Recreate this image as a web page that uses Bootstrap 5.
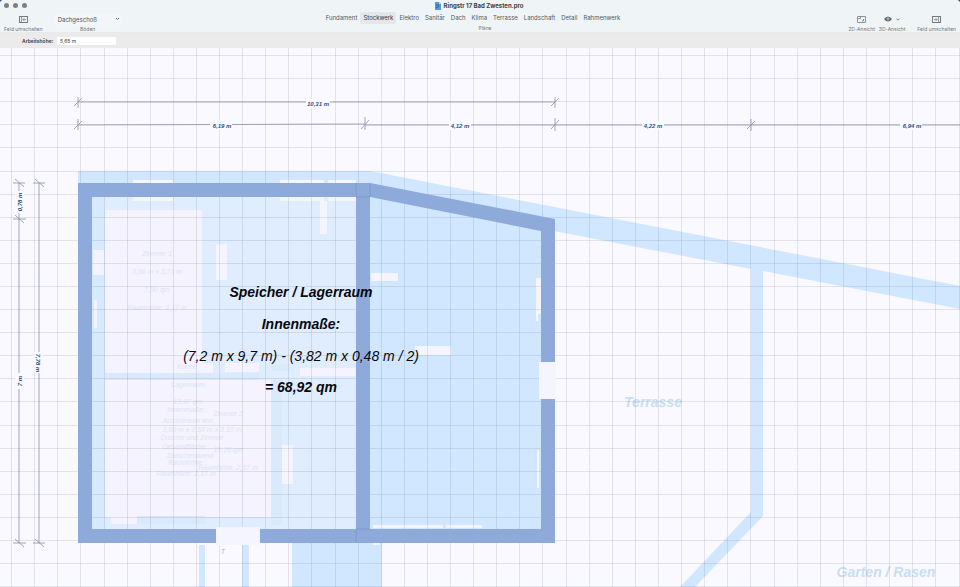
<!DOCTYPE html>
<html lang="de">
<head>
<meta charset="utf-8">
<meta name="viewport" content="width=device-width, initial-scale=1">
<title>Ringstr 17 Bad Zwesten.pro</title>
<link href="https://cdn.jsdelivr.net/npm/bootstrap@5.3.0/dist/css/bootstrap.min.css" rel="stylesheet">
<style>
body{background:#2c5579;font-family:Inter,"Liberation Sans",sans-serif;font-size:6px;line-height:8px;color:#55595d}
.app-window{border-radius:4px 4px 0 0;background:#faf9ff}
.title-bar{background:#eff4f7;height:33px;box-shadow:inset 0 -1px #e6eaec}
.title-bar button{background:none;border:0;padding:0;color:inherit;line-height:8px}
.side-group{flex:1 1 0}
.plan-group{margin-right:14px}
.doc-title{font-size:6px;font-weight:700;line-height:12px;color:#3f4245;gap:3px;padding-left:12px}
.traffic{padding:3px 0 0 4px;gap:4px;height:13px}
.traffic button{width:5px;height:5px;border-radius:50%;background:#7d8082}
.tool-label{font-size:5px;line-height:8px;color:#74787b}
.tool{height:20px}
.tool-icon{height:12px;display:flex;align-items:center;justify-content:center}
.title-bar .plan-tab{padding:1px 3px;line-height:10px;border-radius:2px}
.title-bar .plan-tab.active{background:#e3e7e9;color:#34373a}
.floor-select{appearance:none;width:66px;height:11px;border:0;border-radius:2px;background:#f2f6f8;color:#505458;font-size:6px;line-height:11px;padding:0 3px}
.select-wrap svg{right:1px;top:4px;pointer-events:none}
.height-bar{background:#ebebeb;height:15px;padding-left:22px;gap:4px;color:#3c3c3c}
.height-bar label{font-size:5px;font-weight:600;width:31px}
.height-bar input{width:59px;height:8px;border:0;padding:0 3px;font-size:5px;line-height:8px;background:#fff;color:#3c3c3c}
.plan text{font-family:"Liberation Sans",Arial,sans-serif;font-style:italic;text-anchor:middle}
.grid-line{stroke:#66708f;stroke-opacity:.17;shape-rendering:crispEdges;fill:none}
.wall{fill:#8eaadb}
.pale{fill:#d0e7ff}
.blank{fill:#f5f5ff}
.dims{stroke:#8b92a8;stroke-opacity:.8;fill:none}
.dim-text{font-size:6px;font-weight:700;fill:#2c5085}
.plate{fill:#faf9ff}
.room-text{font-size:14px;fill:#08080c}
.ghost{font-size:7px;fill:#dfe3f4}
.site{font-size:14px;font-weight:700;fill:#c6dff3}
</style>
</head>
<body class="vh-100 overflow-hidden">
<div class="app-window d-flex flex-column h-100 overflow-hidden">
<header class="title-bar d-flex flex-shrink-0">
  <div class="side-group">
    <div class="traffic d-flex">
      <button aria-label="Schließen"></button><button aria-label="Minimieren"></button><button aria-label="Zoomen"></button>
    </div>
    <div class="d-flex">
      <button class="tool ms-1 me-2 text-center">
        <span class="tool-icon"><svg width="9" height="7" viewBox="0 0 9 7" fill="none" stroke="#777b7e"><rect x=".5" y=".5" width="8" height="6"/><path d="M2.5 1v5M7 3.500H4M5.300 2L4 3.500l1.300 1.500" stroke-width=".7"/></svg></span>
        <span class="tool-label d-block">Feld umschalten</span>
      </button>
      <div class="tool ms-1 text-center">
        <div class="select-wrap position-relative tool-icon">
          <select class="floor-select" id="floor"><option>Dachgeschoß</option></select>
          <svg class="position-absolute" width="5" height="4" viewBox="0 0 5 4" fill="none" stroke="#666"><path d="M1 1l1.500 1.500L4 1"/></svg>
        </div>
        <label class="tool-label d-block" for="floor">Böden</label>
      </div>
    </div>
  </div>
  <div class="plan-group text-center">
    <div class="doc-title d-flex justify-content-center align-items-center">
      <svg width="6" height="8" viewBox="0 0 6 8"><path fill="#5a9ad8" d="M0 0h4l2 2v6H0z"/><path fill="#c5def3" d="M4 0v2h2z"/><path d="M1 3h3M1 6l3-2" stroke="#235f9e"/></svg>
      <span>Ringstr 17 Bad Zwesten.pro</span>
    </div>
    <nav class="d-flex" aria-label="Pläne">
      <button class="plan-tab">Fundament</button>
      <button class="plan-tab active">Stockwerk</button>
      <button class="plan-tab">Elektro</button>
      <button class="plan-tab">Sanitär</button>
      <button class="plan-tab">Dach</button>
      <button class="plan-tab">Klima</button>
      <button class="plan-tab">Terrasse</button>
      <button class="plan-tab">Landschaft</button>
      <button class="plan-tab">Detail</button>
      <button class="plan-tab">Rahmenwerk</button>
    </nav>
    <div class="tool-label ps-4">Pläne</div>
  </div>
  <div class="side-group d-flex justify-content-end align-items-end">
    <button class="tool me-1">
      <span class="tool-icon"><svg width="9" height="7" viewBox="0 0 9 7" fill="none" stroke="#777b7e"><path d="M.5 2.500v4h8v-6h-8v2h3v-2M5 5h1.500V3" stroke-width=".8"/></svg></span>
      <span class="tool-label d-block">2D-Ansicht</span>
    </button>
    <button class="tool me-2">
      <span class="tool-icon gap-1"><svg width="8" height="6" viewBox="0 0 8 6"><path d="M0 3q4-5 8 0q-4 5-8 0" fill="#5c6063"/><circle cx="4" cy="3" r="1.400" fill="#dfe4e7"/><circle cx="4" cy="3" r=".8" fill="#5c6063"/></svg><svg width="4" height="3" viewBox="0 0 4 3" fill="none" stroke="#666" stroke-width=".8"><path d="M.5.8L2 2.200L3.500.8"/></svg></span>
      <span class="tool-label d-block">3D-Ansicht</span>
    </button>
    <button class="tool ms-1 me-1">
      <span class="tool-icon"><svg width="9" height="7" viewBox="0 0 9 7" fill="none" stroke="#777b7e"><rect x=".5" y=".5" width="8" height="6"/><path d="M6.500 1v5M2 3.500h3M3.700 2L5 3.500L3.700 5" stroke-width=".7"/></svg></span>
      <span class="tool-label d-block">Feld umschalten</span>
    </button>
  </div>
</header>
<div class="height-bar d-flex align-items-center flex-shrink-0">
  <label for="work-height">Arbeitshöhe:</label>
  <input id="work-height" type="text" value="5,65 m">
</div>
<main class="flex-fill overflow-hidden">
<svg class="plan d-block w-100 h-100" viewBox="0 48 960 539" preserveAspectRatio="xMinYMin slice" role="img" aria-label="Grundriss Dachgeschoß">
  <!-- property outline and terrace edge -->
  <path class="pale" d="M78 171H370L960 286V309L763 271V516L695 587H680L751 512V269L554 231L370 197H78z"/>
  <path class="pale" d="M199 545h6v42h-6zM242 545h7v42h-7zM292 543h90v44h-90z"/>
  <!-- room surfaces -->
  <path fill="#e0edff" d="M92 196h264v333H92z"/>
  <path fill="#d6e9ff" d="M92 196h13v333H92z"/>
  <path class="pale" d="M369 196L541 230V529H369z"/>
  <path fill="#f4f3ff" d="M105 210h97v153h11v10H105zM105 380h166v137h-66v7h-94v-7h-6zM93 250h11v25H93zM94 300h3v28h-3zM225 363h34v9h-34zM300 368h56v8h-56z"/>
  <path fill="#dbe9fd" d="M105 373h154v7H105zM137 516h68v8h-68zM271 364h19v7h-19zM271 380h11v145h-11z"/>
  <path class="blank" d="M133 180h40v3h-40zM133 197h40v4h-40zM280 180h44v3h-44zM328 180h28v3h-28zM280 197h44v4h-44zM328 197h28v4h-28zM320 201h7v33h-7zM216 244h11v36h-11zM282 445h11v39h-11z"/>
  <path class="blank" d="M371 273h27v8h-27zM415 346h36v9h-36zM536 278h5v36h-3v7h-2zM537 450h2v38h-2zM373 525h70v3h-70zM446 525h36v3h-36zM373 543h7v2h-7z"/>
  <!-- texts of the floor below -->
  <g class="ghost">
    <text x="157" y="256">Zimmer 1</text><text x="157" y="274">3,66 m x 3,73 m</text><text x="157" y="292">7,90 qm</text><text x="157" y="310">Raumhöhe: 2,17 m</text>
    <text x="187" y="369">Küche</text><text x="188" y="387">Lagerraum</text><text x="188" y="404">13,97 qm</text><text x="186" y="412">Innenmaße:</text>
    <text x="228" y="416">Zimmer 2</text><text x="188" y="423">Abstellraum von</text><text x="202" y="432">3,60 m x 3,53 m x 3,10 m</text>
    <text x="190" y="440">- Dusche und Zimmer</text><text x="184" y="449">Gesamtfläche</text><text x="228" y="452">13,26 qm</text><text x="190" y="458">Zwischenwand</text><text x="185" y="465">Raumhöhe</text><text x="228" y="470">Raumhöhe: 2,17 m</text><text x="186" y="476">Raumhöhe: 2,17 m</text>
  </g>
  <text class="site" x="653" y="407">Terrasse</text>
  <text class="site" x="886" y="577">Garten / Rasen</text>
  <path class="grid-line" d="M11 48v539M34 48v539M57 48v539M80 48v539M104 48v539M127 48v539M150 48v539M173 48v539M196 48v539M219 48v539M242 48v539M265 48v539M288 48v539M311 48v539M335 48v539M358 48v539M381 48v539M404 48v539M427 48v539M450 48v539M473 48v539M496 48v539M519 48v539M542 48v539M566 48v539M589 48v539M612 48v539M635 48v539M658 48v539M681 48v539M704 48v539M727 48v539M750 48v539M774 48v539M797 48v539M820 48v539M843 48v539M866 48v539M889 48v539M912 48v539M935 48v539M959 48v539"/>
  <path class="grid-line" d="M0 55h960M0 78h960M0 101h960M0 124h960M0 147h960M0 171h960M0 194h960M0 217h960M0 240h960M0 263h960M0 286h960M0 309h960M0 332h960M0 355h960M0 378h960M0 401h960M0 425h960M0 448h960M0 471h960M0 494h960M0 517h960M0 540h960M0 563h960M0 586h960"/>
  <!-- walls of the current floor with door and window openings -->
  <path class="wall" fill-rule="evenodd" d="M78 183H370L555 219V543H78zM92 197V529H356V197zM370 197V529H541V231z"/>
  <path fill="none" stroke="#6e8cc4" stroke-opacity=".5" d="M356 183v14h14v-14M356 543v-14h14"/>
  <path class="blank" d="M216 527h44v18h-44zM539 362h17v37h-17z"/>
  <text x="223" y="554" font-size="7" fill="#b5bccb">T</text>
  <!-- dimension chains -->
  <path class="dims" d="M78 102H555M78 125L365 124M365 125H960M19 183V543M39 183V543"/>
  <path class="dims" d="M74 106l8-8M78 97v11M551 106l8-8M555 97v11M74 129l8-8M78 119v11M361 129l8-9M365 117v13M551 129l8-9M555 118v13M747 129l8-8M751 119v12M15 179l9 8M13 183h12M15 215l9 8M13 219h13M35 179l9 8M33 183h12M15 539l9 8M13 543h13M35 539l9 8M33 543h12"/>
  <path class="plate" d="M306 99h24v9h-24zM210 121h22v9h-22zM449 121h22v9h-22zM642 121h22v9h-22zM900 121h22v9h-22zM15 191h9v22h-9zM15 373h9v16h-9zM34 352h9v21h-9z"/>
  <g class="dim-text">
    <text x="318" y="106">10,31 m</text><text x="222" y="128">6,19 m</text><text x="460" y="128">4,12 m</text><text x="653" y="128">4,22 m</text><text x="912" y="128">6,94 m</text>
    <text transform="translate(22 202) rotate(-90)">0,78 m</text><text transform="translate(22 381) rotate(-90)">7 m</text><text transform="translate(36 363) rotate(90)">7,78 m</text>
  </g>
  <g class="room-text">
    <text x="301" y="297" font-weight="700">Speicher / Lagerraum</text>
    <text x="301" y="329" font-weight="700">Innenmaße:</text>
    <text x="301" y="361">(7,2 m x 9,7 m) - (3,82 m x 0,48 m / 2)</text>
    <text x="301" y="392" font-weight="700">= 68,92 qm</text>
  </g>
</svg>
</main>
</div>
<script src="https://cdn.jsdelivr.net/npm/bootstrap@5.3.0/dist/js/bootstrap.bundle.min.js"></script>
</body>
</html>
